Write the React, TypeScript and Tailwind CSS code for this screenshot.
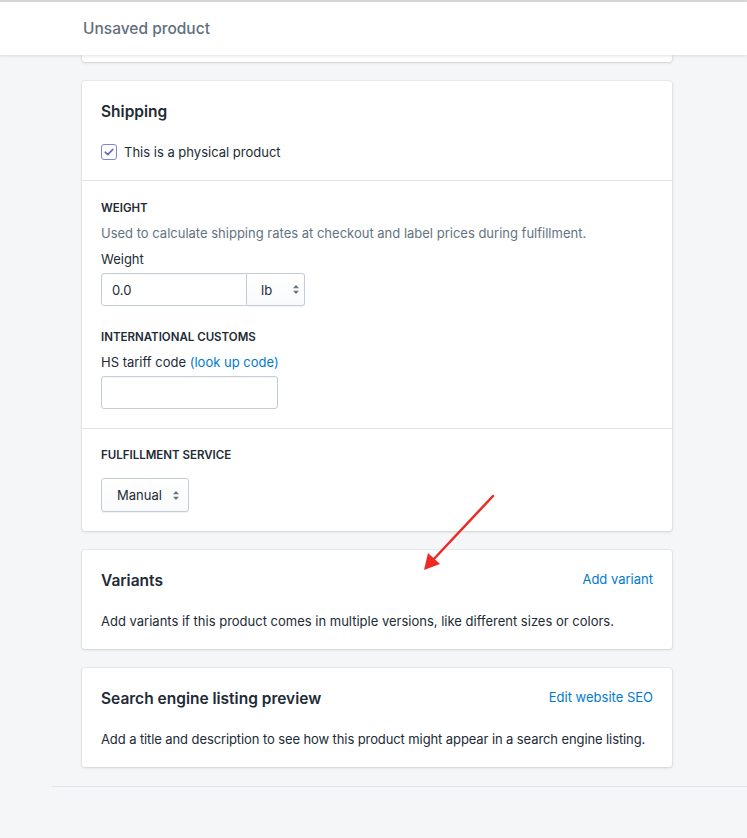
function Carets() {
  return (
    <svg width="8" height="11" viewBox="0 0 8 11" className="text-[#637381]" fill="currentColor">
      <path d="M4 1 L7 4.2 H1 Z" />
      <path d="M4 10 L7 6.8 H1 Z" />
    </svg>
  );
}

function Card({ children, className = "" }: { children: React.ReactNode; className?: string }) {
  return (
    <div className={`bg-white rounded-[3px] shadow-[0_0_0_1px_rgba(63,63,68,0.05),0_1px_3px_0_rgba(63,63,68,0.15)] ${className}`}>
      {children}
    </div>
  );
}

function SectionLabel({ children }: { children: React.ReactNode }) {
  return <div className="text-[11.5px] leading-4 font-semibold uppercase text-[#212b36]">{children}</div>;
}

export default function App() {
  return (
    <div
      className="relative min-h-[838px] bg-[#f4f6f8] text-[#212b36] text-[13px] leading-5"
      style={{ fontFamily: "Inter, 'Noto Sans', sans-serif" }}
    >
      <div className="h-[2px] bg-[#d6d9dc]" />
      <header className="relative z-10 h-[53px] bg-white shadow-[0_1px_3px_rgba(63,63,68,0.15)] flex items-center pl-[83px]">
        <span className="text-[15.5px] font-medium text-[#5f6f7e]">Unsaved product</span>
      </header>

      <div className="w-[590px] ml-[82px] flex flex-col gap-[19px]">
        {/* bottom edge of the card above, scrolled under the header */}
        <div className="h-[7px] bg-white rounded-b-[3px] shadow-[0_0_0_1px_rgba(63,63,68,0.05),0_1px_3px_0_rgba(63,63,68,0.15)]" />

        <Card>
          <div className="px-[19px] pt-5 pb-[18px]">
            <h2 className="text-[15.5px] leading-[22px] font-semibold">Shipping</h2>
            <label className="mt-[19px] flex items-center gap-[7px]">
              <span className="w-4 h-4 rounded-[3px] border border-[#7d87d2] flex items-center justify-center bg-white">
                <svg width="10" height="8" viewBox="0 0 10 8" fill="none" stroke="#5c6ac4" strokeWidth="1.6" strokeLinecap="round" strokeLinejoin="round">
                  <path d="M1.2 4.2 L3.8 6.6 L8.8 1.4" />
                </svg>
              </span>
              <span>This is a physical product</span>
            </label>
          </div>

          <div className="border-t border-[#dfe3e8] px-[19px] pt-[19px] pb-[19px]">
            <SectionLabel>Weight</SectionLabel>
            <p className="mt-[7px] text-[#637381]">Used to calculate shipping rates at checkout and label prices during fulfillment.</p>
            <div className="mt-[6px]">Weight</div>
            <div className="mt-[4px] flex w-[204px] h-[33px]">
              <div className="w-[146px] border border-[#c4cdd5] rounded-l-[3px] shadow-[inset_0_1px_0_0_rgba(99,115,129,0.05)] flex items-center pl-[10px]">0.0</div>
              <div className="flex-1 border border-l-0 border-[#c4cdd5] rounded-r-[3px] bg-gradient-to-b from-white to-[#f9fafb] shadow-[0_1px_0_0_rgba(22,29,37,0.05)] flex items-center pl-[14px] gap-[20px]">
                <span>lb</span>
                <Carets />
              </div>
            </div>

            <div className="mt-[23px]">
              <SectionLabel>International customs</SectionLabel>
            </div>
            <div className="mt-[7px]">
              HS tariff code <span className="text-[#007ace]">(look up code)</span>
            </div>
            <div className="mt-[4px] w-[177px] h-[33px] border border-[#c4cdd5] rounded-[3px] shadow-[inset_0_1px_0_0_rgba(99,115,129,0.05)]" />
          </div>

          <div className="border-t border-[#dfe3e8] px-[19px] pt-[18px] pb-[19px]">
            <SectionLabel>Fulfillment service</SectionLabel>
            <div className="mt-[15px] w-[88px] h-[34px] border border-[#c4cdd5] rounded-[3px] bg-gradient-to-b from-white to-[#f9fafb] shadow-[0_1px_0_0_rgba(22,29,37,0.05)] flex items-center pl-[15px] gap-[10px]">
              <span>Manual</span>
              <Carets />
            </div>
          </div>
        </Card>

        <Card className="px-[19px] pt-5 pb-[18px]">
          <div className="flex items-start justify-between">
            <h2 className="text-[15.5px] leading-[22px] font-semibold">Variants</h2>
            <span className="text-[#007ace] leading-[18px]">Add variant</span>
          </div>
          <p className="mt-[19px]">Add variants if this product comes in multiple versions, like different sizes or colors.</p>
        </Card>

        <Card className="px-[19px] pt-5 pb-[18px]">
          <div className="flex items-start justify-between">
            <h2 className="text-[15.5px] leading-[22px] font-semibold">Search engine listing preview</h2>
            <span className="text-[#007ace] leading-[18px]">Edit website SEO</span>
          </div>
          <p className="mt-[19px] whitespace-nowrap tracking-[-0.1px]">Add a title and description to see how this product might appear in a search engine listing.</p>
        </Card>
      </div>

      <div className="mt-[19px] ml-[52px] border-t border-[#dfe3e8]" />

      <svg className="absolute left-0 top-0 pointer-events-none" width="747" height="838" viewBox="0 0 747 838">
        <line x1="493" y1="496" x2="432" y2="561" stroke="#ee2a24" strokeWidth="2.5" strokeLinecap="round" />
        <path d="M424 570 L428 553 L440 564 Z" fill="#ee2a24" />
      </svg>
    </div>
  );
}
